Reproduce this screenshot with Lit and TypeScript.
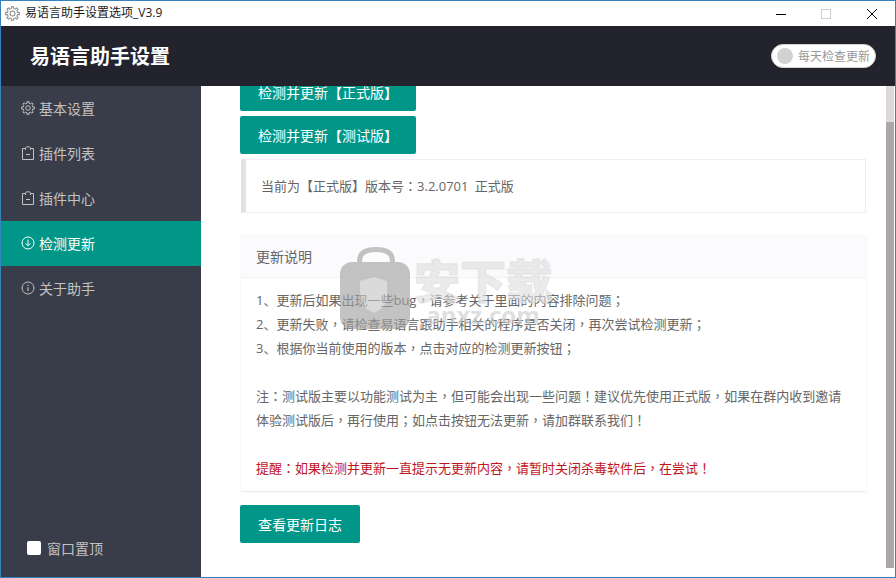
import { LitElement, html, css } from "lit";
import { customElement } from "lit/decorators.js";

function gearPoints(cx: number, cy: number, r1: number, r2: number, n: number): string {
  const pts: string[] = [];
  for (let i = 0; i < n; i++) {
    const a = (i / n) * Math.PI * 2;
    const w = Math.PI / n;
    const at = (r: number, t: number) =>
      `${(cx + r * Math.cos(t)).toFixed(2)},${(cy + r * Math.sin(t)).toFixed(2)}`;
    pts.push(at(r1, a - w * 0.5), at(r2, a - w * 0.42), at(r2, a + w * 0.42), at(r1, a + w * 0.5));
  }
  return pts.join(" ");
}

const gearIcon = (cls: string) => html`<svg class=${cls} viewBox="0 0 16 16" fill="none" stroke="currentColor" stroke-width="1.1">
  <polygon points=${gearPoints(8, 8, 5.6, 7.4, 8)} stroke-linejoin="round"></polygon>
  <circle cx="8" cy="8" r="2.6"></circle>
</svg>`;

const bagIcon = html`<svg class="nav-icon" viewBox="0 0 14 14" fill="none" stroke="currentColor" stroke-width="1">
  <path d="M4.5 2.5H1.5V13.5H12.5V2.5H9.5"></path>
  <path d="M4.5 4V2.2C4.5 1.2 5.5 .8 7 .8S9.5 1.2 9.5 2.2V4"></path>
  <path d="M5 8.5H9"></path>
</svg>`;

const downIcon = html`<svg class="nav-icon" viewBox="0 0 14 14" fill="none" stroke="currentColor" stroke-width="1">
  <circle cx="7" cy="7" r="6"></circle>
  <path d="M7 3.6V9.6M4.6 7.4L7 9.8L9.4 7.4"></path>
</svg>`;

const infoIcon = html`<svg class="nav-icon" viewBox="0 0 14 14" fill="none" stroke="currentColor" stroke-width="1">
  <circle cx="7" cy="7" r="6"></circle>
  <path d="M7 6.2V10" stroke-width="1.2"></path>
  <path d="M7 3.8V5" stroke-width="1.2"></path>
</svg>`;

const NAV = [
  { label: "基本设置", icon: gearIcon("nav-icon"), active: false },
  { label: "插件列表", icon: bagIcon, active: false },
  { label: "插件中心", icon: bagIcon, active: false },
  { label: "检测更新", icon: downIcon, active: true },
  { label: "关于助手", icon: infoIcon, active: false },
];

// The reference's fullwidth punctuation sits centred in its cell, as the TC face draws it.
const t = (s: string) =>
  s.split(/([，；：！])/).map((part, i) => (i % 2 ? html`<span class="p">${part}</span>` : part));

@customElement("app-root")
export class AppRoot extends LitElement {
  static styles = css`
    :host {
      display: block;
      width: 896px;
      height: 578px;
      font-family: "Open Sans", "Noto Sans CJK SC", sans-serif;
    }
    * { box-sizing: border-box; }
    .p { font-family: "Noto Sans CJK TC", sans-serif; }
    .window {
      position: relative;
      width: 896px;
      height: 578px;
      border: 1px solid #3582bd;
      display: flex;
      flex-direction: column;
      background: #fff;
      overflow: hidden;
    }
    .titlebar {
      height: 25px;
      flex: none;
      display: flex;
      align-items: center;
      background: #fff;
    }
    .app-icon { width: 15px; height: 15px; margin-left: 4px; color: #8c8c8c; flex: none; }
    .title-text { margin-left: 5px; font-size: 12px; color: #1a1a1a; flex: 1; line-height: 23px; height: 25px; }
    .wc { height: 25px; display: flex; align-items: center; justify-content: center; flex: none; }
    .wc svg { width: 12px; height: 12px; }
    .w46 { width: 46px; }
    .w45 { width: 45px; }
    .header {
      height: 60px;
      flex: none;
      background: #23232e;
      display: flex;
      align-items: center;
      justify-content: space-between;
      padding: 0 19px 0 29px;
    }
    .brand { font-size: 20px; font-weight: 700; color: #fff; line-height: 30px; height: 28px; }
    .toggle {
      width: 105px;
      height: 24px;
      border-radius: 12px;
      background: #fff;
      border: 1px solid #d2d2d2;
      display: flex;
      align-items: center;
      padding-left: 5px;
      gap: 5px;
    }
    .knob { width: 16px; height: 16px; border-radius: 50%; background: #d2d2d2; flex: none; }
    .toggle span { font-size: 12px; color: #999; white-space: nowrap; }
    .body { flex: 1; display: flex; min-height: 0; }
    .side {
      width: 200px;
      flex: none;
      background: #393d49;
      display: flex;
      flex-direction: column;
    }
    .nav-item {
      height: 45px;
      display: flex;
      align-items: center;
      padding: 0 0 2px 20px;
      gap: 4px;
      font-size: 14px;
      color: #c2c2c2;
    }
    .nav-item.on { background: #009688; color: #fff; }
    .nav-icon { width: 14px; height: 14px; flex: none; }
    .pin {
      margin-top: auto;
      height: 14px;
      margin-bottom: 22px;
      padding-left: 26px;
      display: flex;
      align-items: center;
      gap: 6px;
      font-size: 14px;
      color: #c2c2c2;
    }
    .check { width: 14px; height: 14px; background: #fff; border-radius: 2px; flex: none; }
    .content { flex: 1; min-width: 0; overflow: hidden; }
    .inner {
      margin-top: -13px;
      padding: 0 20px 0 39px;
      display: flex;
      flex-direction: column;
      align-items: flex-start;
    }
    .btn {
      height: 38px;
      line-height: 40px;
      padding: 0 18px;
      background: #009688;
      color: #fff;
      font-size: 14px;
      border-radius: 2px;
      white-space: nowrap;
    }
    .mt5 { margin-top: 5px; }
    .quote {
      margin: 5px 0 0 1px;
      width: 625px;
      height: 54px;
      border: 1px solid #eee;
      border-left: 5px solid #e2e2e2;
      padding: 15px;
      font-size: 13px;
      line-height: 22px;
      color: #666;
      white-space: nowrap;
      word-spacing: 3px;
    }
    .card {
      margin: 21px 0 14px 1px;
      width: 625px;
      height: 257px;
      background: #fff;
      border-radius: 2px;
      box-shadow: 0 1px 2px rgba(0, 0, 0, 0.1);
    }
    .card-head {
      height: 44px;
      line-height: 46px;
      padding: 0 15px;
      font-size: 14px;
      color: #666;
      background: #fbfafc;
      border-bottom: 1px solid #f2f2f2;
    }
    .card-body {
      padding: 10px 15px;
      font-size: 13px;
      line-height: 24px;
      color: #666;
    }
    .warn { color: #c0141f; }
    .scroll { width: 8px; margin-right: 1px; flex: none; display: flex; flex-direction: column; margin-bottom: 9px; }
    .track { height: 36px; background: #dcd8dc; }
    .thumb { flex: 1; background: #aaa6aa; }
    .mark {
      position: absolute;
      left: 338px;
      top: 245px;
      display: flex;
      gap: 3px;
      pointer-events: none;
    }
    .mark svg { width: 72px; height: 86px; flex: none; opacity: 0.62; }
    .mark-text { display: flex; flex-direction: column; align-items: center; padding-top: 10px; }
    .mark-cn {
      font-size: 46px;
      line-height: 48px;
      font-weight: 900;
      color: rgba(222, 222, 222, 0.62);
      -webkit-text-stroke: 1.5px rgba(222, 222, 222, 0.5);
      white-space: nowrap;
    }
    .mark-en {
      font-size: 24px;
      line-height: 22px;
      font-weight: 700;
      color: rgba(205, 205, 205, 0.65);
      white-space: nowrap;
    }
  `;

  render() {
    return html`
      <div class="window">
        <div class="titlebar">
          ${gearIcon("app-icon")}
          <div class="title-text">易语言助手设置选项_V3.9</div>
          <div class="wc w45">
            <svg viewBox="0 0 12 12"><path d="M1 6.5H11" stroke="#000" stroke-width="1"></path></svg>
          </div>
          <div class="wc w46">
            <svg viewBox="0 0 12 12"><rect x="1.5" y="1.5" width="9" height="9" fill="none" stroke="#ccc"></rect></svg>
          </div>
          <div class="wc w46">
            <svg viewBox="0 0 12 12"><path d="M1 1L11 11M11 1L1 11" stroke="#000" stroke-width="1"></path></svg>
          </div>
        </div>
        <div class="header">
          <div class="brand">易语言助手设置</div>
          <div class="toggle"><div class="knob"></div><span>每天检查更新</span></div>
        </div>
        <div class="body">
          <div class="side">
            ${NAV.map(
              (n) => html`<div class="nav-item ${n.active ? "on" : ""}">${n.icon}<span>${n.label}</span></div>`
            )}
            <div class="pin"><div class="check"></div><span>窗口置顶</span></div>
          </div>
          <div class="content">
            <div class="inner">
              <div class="btn">检测并更新【正式版】</div>
              <div class="btn mt5">检测并更新【测试版】</div>
              <div class="quote">${t("当前为【正式版】版本号：3.2.0701 正式版")}</div>
              <div class="card">
                <div class="card-head">更新说明</div>
                <div class="card-body">
                  ${t("1、更新后如果出现一些bug，请参考关于里面的内容排除问题；")}<br />
                  ${t("2、更新失败，请检查易语言跟助手相关的程序是否关闭，再次尝试检测更新；")}<br />
                  ${t("3、根据你当前使用的版本，点击对应的检测更新按钮；")}<br />
                  <br />
                  ${t("注：测试版主要以功能测试为主，但可能会出现一些问题！建议优先使用正式版，如果在群内收到邀请体验测试版后，再行使用；如点击按钮无法更新，请加群联系我们！")}<br />
                  <br />
                  <span class="warn">${t("提醒：如果检测并更新一直提示无更新内容，请暂时关闭杀毒软件后，在尝试！")}</span>
                </div>
              </div>
              <div class="btn">查看更新日志</div>
            </div>
          </div>
          <div class="scroll"><div class="track"></div><div class="thumb"></div></div>
        </div>
        <div class="mark">
          <svg viewBox="0 0 72 86">
            <path d="M20.5 20V15C20.5 7 27 3.5 37 3.5S53.5 7 53.5 15V20" fill="none" stroke="#a0a0a0" stroke-width="5"></path>
            <rect x="1" y="16" width="70" height="67" rx="12" fill="#a0a0a0"></rect>
            <path d="M21 35L35 31L48 35V52C48 59 42 63 35 67C27 63 21 59 21 52Z" fill="#c4c4c4"></path>
          </svg>
          <div class="mark-text">
            <div class="mark-cn">安下载</div>
            <div class="mark-en">anxz.com</div>
          </div>
        </div>
      </div>
    `;
  }
}
